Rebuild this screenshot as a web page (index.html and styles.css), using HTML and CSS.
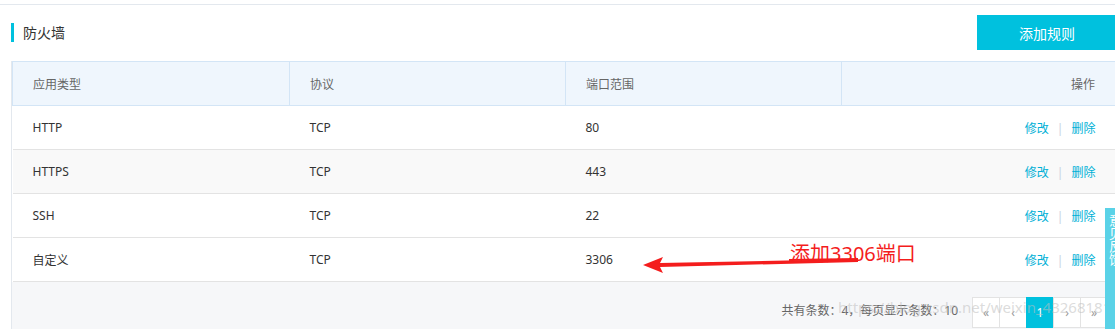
FILE: index.html
```html
<!DOCTYPE html>
<html lang="zh">
<head>
  <meta charset="UTF-8">
  <title>防火墙</title>
  <link rel="stylesheet" href="styles.css">
</head>
<body>
  <div class="page">
    <div class="panel">
      <div class="panel-head">
        <h3 class="panel-title">防火墙</h3>
        <button class="btn-add">添加规则</button>
      </div>

      <div class="table-wrap">
        <table class="rule-table">
          <colgroup>
            <col class="c1"><col class="c2"><col class="c3"><col>
          </colgroup>
          <thead>
            <tr>
              <th>应用类型</th>
              <th>协议</th>
              <th>端口范围</th>
              <th class="op">操作</th>
            </tr>
          </thead>
          <tbody>
            <tr>
              <td>HTTP</td><td>TCP</td><td>80</td>
              <td class="op"><a>修改</a><span class="sep">|</span><a>删除</a></td>
            </tr>
            <tr class="alt">
              <td>HTTPS</td><td>TCP</td><td>443</td>
              <td class="op"><a>修改</a><span class="sep">|</span><a>删除</a></td>
            </tr>
            <tr>
              <td>SSH</td><td>TCP</td><td>22</td>
              <td class="op"><a>修改</a><span class="sep">|</span><a>删除</a></td>
            </tr>
            <tr>
              <td>自定义</td><td>TCP</td><td>3306</td>
              <td class="op"><a>修改</a><span class="sep">|</span><a>删除</a></td>
            </tr>
          </tbody>
        </table>

        <div class="table-foot">
          <span class="total">共有条数：4，每页显示条数：10</span>
          <div class="pager">
            <span class="pg">«</span>
            <span class="pg">‹</span>
            <span class="pg active">1</span>
            <span class="pg">›</span>
            <span class="pg">»</span>
          </div>
        </div>

        <!-- annotation drawn on top of the screenshot -->
        <div class="note">添加3306端口</div>
        <svg class="arrow" width="230" height="24" viewBox="0 0 230 24">
          <path d="M0 11 L20 3 L17 9 L215 5 L215 8 L17 13 L20 19 Z" fill="#f41d1d"/>
          <path d="M146 6 L215 5" stroke="#f41d1d" stroke-width="2"/>
        </svg>
        <div class="watermark">https://blog.csdn.net/weixin_43268181</div>
      </div>
    </div>
  </div>
  <div class="side-tab">意见反馈</div>
</body>
</html>
```

FILE: styles.css
```css
html, body {
  margin: 0;
  overflow: hidden;
}
body {
  font-family: "Noto Sans", "Noto Sans CJK SC", sans-serif;
  font-size: 12px;
  color: #333;
  background: #fff;
  width: 1115px;
  height: 329px;
  position: relative;
}
.page {
  border-top: 1px solid #e3e8ee;
  margin-top: 4px;
  padding-left: 11px;
  width: 1106px;
}
.panel-head {
  display: flex;
  justify-content: space-between;
  align-items: flex-start;
  height: 56px;
}
.panel-title {
  margin: 18px 0 0;
  font-size: 14px;
  font-weight: normal;
  color: #333;
  border-left: 3px solid #00c1de;
  padding-left: 9px;
  height: 19px;
  line-height: 19px;
}
.btn-add {
  width: 140px;
  height: 35px;
  border: none;
  background: #00c1de;
  color: #fff;
  font-family: inherit;
  font-size: 14px;
  margin-top: 10px;
  cursor: pointer;
}
.table-wrap {
  position: relative;
  border-left: 1px solid #e3e8ee;
}
.rule-table {
  width: 100%;
  border-collapse: collapse;
  table-layout: fixed;
}
.c1 { width: 277px; }
.c2 { width: 276px; }
.c3 { width: 276px; }
.rule-table th {
  height: 43px;
  background: #eff6fd;
  border: 1px solid #d3e5f6;
  border-left: none;
  font-weight: normal;
  color: #666;
  text-align: left;
  padding: 0 20px;
}
.rule-table th:first-child {
  border-left: 1px solid #d3e5f6;
}
.rule-table td {
  height: 43px;
  border-bottom: 1px solid #e3e3e3;
  padding: 0 20px;
}
.rule-table tr.alt td {
  background: #f9f9f9;
}
.rule-table .op {
  text-align: right;
  padding-right: 21px;
}
.op a {
  color: #00b0d6;
  cursor: pointer;
}
.op .sep {
  color: #c8d3e2;
  margin: 0 8px;
}
.table-foot {
  height: 48px;
  background: #f6f7f9;
  display: flex;
  justify-content: flex-end;
  align-items: center;
  padding-right: 10px;
}
.total {
  color: #666;
  margin-right: 14px;
  margin-top: 8px;
}
.pager {
  display: flex;
  margin-top: 12px;
}
.pg {
  width: 26px;
  height: 29px;
  border: 1px solid #e3e3e3;
  border-right: none;
  background: #fff;
  color: #999;
  display: flex;
  align-items: center;
  justify-content: center;
}
.pg.active {
  background: #00c1de;
  border-color: #00c1de;
  color: #fff;
}
.note {
  position: absolute;
  left: 778px;
  top: 181px;
  font-size: 20px;
  color: #f41d1d;
  line-height: 24px;
}
.arrow {
  position: absolute;
  left: 631px;
  top: 193px;
}
.watermark {
  position: absolute;
  left: 826px;
  top: 236px;
  font-size: 15px;
  color: rgba(190, 190, 190, 0.55);
  white-space: nowrap;
}
.side-tab {
  position: absolute;
  left: 1105px;
  top: 208px;
  width: 22px;
  height: 130px;
  background: #5ad2e7;
  color: #fff;
  font-size: 13px;
  padding: 6px 0 0 3px;
  line-height: 24px;
  box-sizing: border-box;
  writing-mode: vertical-rl;
}
```
